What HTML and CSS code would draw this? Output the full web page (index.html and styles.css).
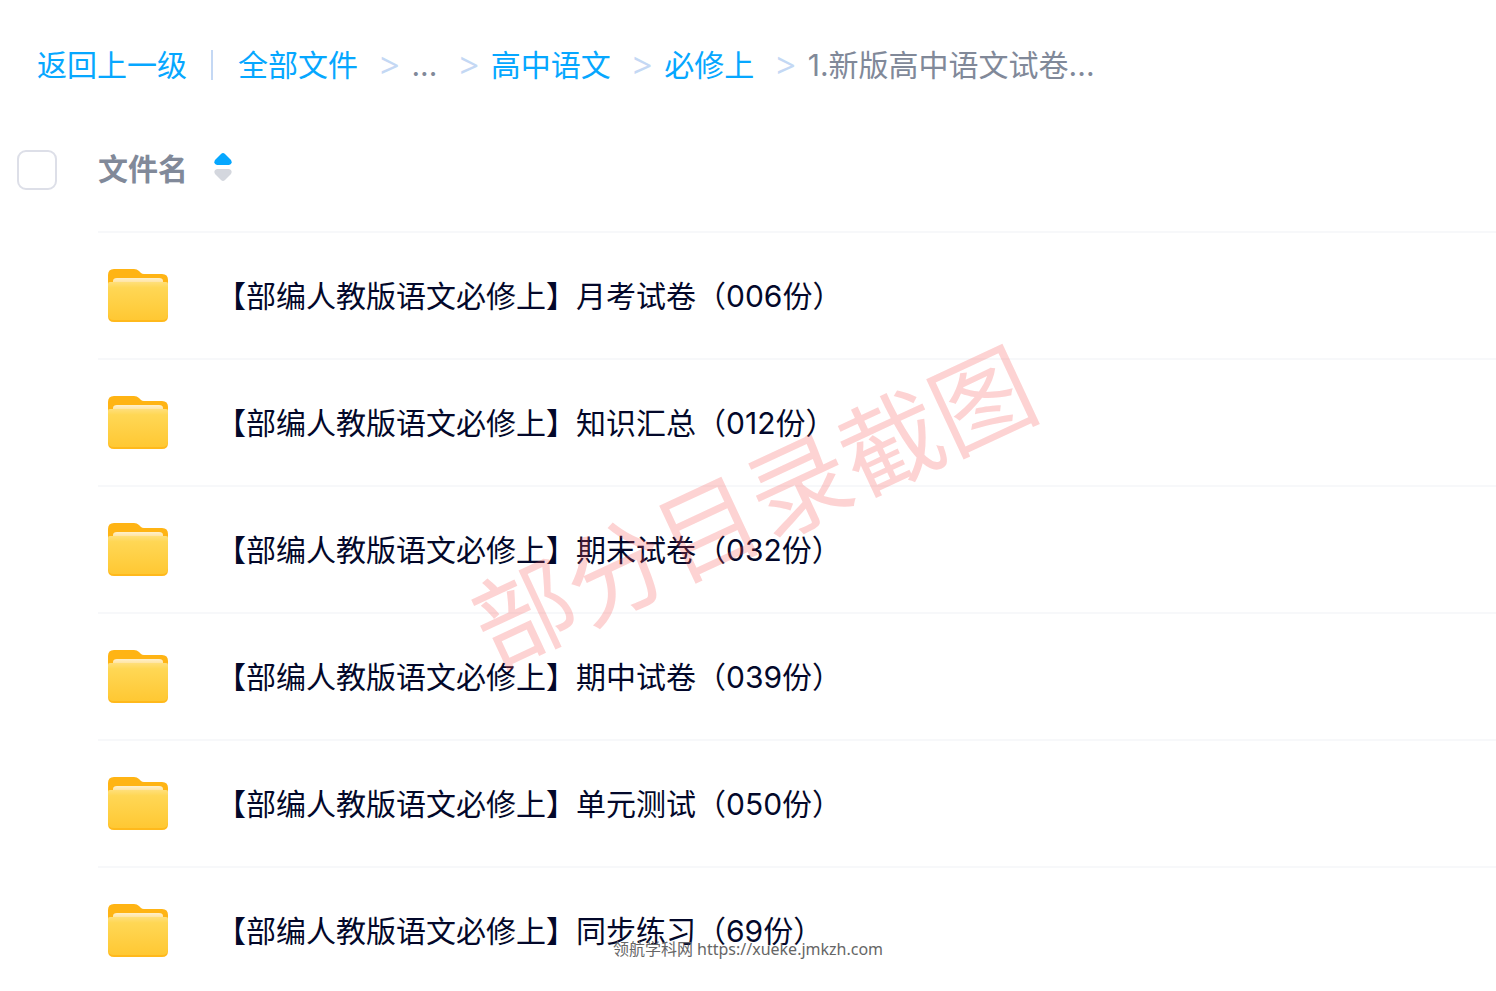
FILE: index.html
```
<!DOCTYPE html>
<html lang="zh-CN">
<head>
    <meta charset="UTF-8">
    <meta name="viewport" content="width=device-width, initial-scale=1.0">
    <title>全部文件</title>
    <link rel="stylesheet" href="styles.css">
</head>
<body>
    <!-- shared folder icon -->
    <svg class="defs" width="0" height="0" aria-hidden="true">
        <defs>
            <linearGradient id="front" x1="0" y1="0" x2="0" y2="1">
                <stop offset="0" stop-color="#ffdf7a"/>
                <stop offset="0.15" stop-color="#ffd755"/>
                <stop offset="1" stop-color="#ffc833"/>
            </linearGradient>
            <linearGradient id="paper" x1="0" y1="0" x2="0" y2="1">
                <stop offset="0" stop-color="#fff0cb"/>
                <stop offset="1" stop-color="#ffe29a"/>
            </linearGradient>
        </defs>
        <symbol id="folder" viewBox="0 0 60 54">
            <path d="M0 6Q0 0 6 0H26Q29 0 31 2L33 4Q34 5 36 5H54Q60 5 60 11V25H0Z" fill="#ffb414"/>
            <path d="M5 14V12Q5 9 9 9H51Q55 9 55 12V14Z" fill="url(#paper)"/>
            <path d="M0 13H60V47Q60 53 54 53H6Q0 53 0 47Z" fill="#ffb91c"/>
            <path d="M0 15Q0 13 2 13H58Q60 13 60 15V45Q60 51 54 51H6Q0 51 0 45Z" fill="url(#front)"/>
        </symbol>
    </svg>

    <nav class="breadcrumb">
        <a href="#">返回上一级</a>
        <span class="divider"></span>
        <a href="#">全部文件</a>
        <span class="arrow">&gt;</span>
        <span class="current">...</span>
        <span class="arrow">&gt;</span>
        <a href="#">高中语文</a>
        <span class="arrow">&gt;</span>
        <a href="#">必修上</a>
        <span class="arrow">&gt;</span>
        <span class="current">1.新版高中语文试卷...</span>
    </nav>

    <table class="files">
        <thead>
            <tr>
                <th class="check"><input type="checkbox" aria-label="全选"></th>
                <th class="name">
                    <button class="sort" type="button">
                        文件名
                        <svg width="18" height="34" viewBox="0 0 18 34" aria-hidden="true">
                            <path d="M7 2Q9 0 11 2L17 8Q19 12 15 13H3Q-1 12 1 8Z" fill="#06a7ff"/>
                            <path d="M7 28Q9 30 11 28L17 22Q19 18 15 17H3Q-1 18 1 22Z" fill="#d4d7de"/>
                        </svg>
                    </button>
                </th>
            </tr>
        </thead>
        <tbody>
            <tr>
                <td></td>
                <td class="name"><div class="file"><svg class="icon"><use href="#folder"/></svg><span>【部编人教版语文必修上】月考试卷（006份）</span></div></td>
            </tr>
            <tr>
                <td></td>
                <td class="name"><div class="file"><svg class="icon"><use href="#folder"/></svg><span>【部编人教版语文必修上】知识汇总（012份）</span></div></td>
            </tr>
            <tr>
                <td></td>
                <td class="name"><div class="file"><svg class="icon"><use href="#folder"/></svg><span>【部编人教版语文必修上】期末试卷（032份）</span></div></td>
            </tr>
            <tr>
                <td></td>
                <td class="name"><div class="file"><svg class="icon"><use href="#folder"/></svg><span>【部编人教版语文必修上】期中试卷（039份）</span></div></td>
            </tr>
            <tr>
                <td></td>
                <td class="name"><div class="file"><svg class="icon"><use href="#folder"/></svg><span>【部编人教版语文必修上】单元测试（050份）</span></div></td>
            </tr>
            <tr>
                <td></td>
                <td class="name"><div class="file"><svg class="icon"><use href="#folder"/></svg><span>【部编人教版语文必修上】同步练习（69份）</span></div></td>
            </tr>
        </tbody>
    </table>

    <div class="watermark">部分目录截图</div>
    <div class="site">领航学科网 https://xueke.jmkzh.com</div>
</body>
</html>
```
FILE: styles.css
```
* {
    box-sizing: border-box;
}
body {
    position: relative;
    margin: 0;
    overflow: hidden;
    background-color: #fff;
    color: #03082a;
    font-family: Inter, "Noto Sans CJK SC", sans-serif;
    font-size: 30px;
    line-height: 44px;
}
.defs {
    position: absolute;
}
.breadcrumb {
    display: flex;
    align-items: center;
    padding: 43px 37px 18px;
    white-space: nowrap;
}
.breadcrumb a {
    color: #06a7ff;
    text-decoration: none;
}
.divider {
    width: 2px;
    height: 30px;
    margin: 0 25px 0 24px;
    background-color: #c4d8f4;
}
.arrow {
    margin: 0 12px 0 22px;
    color: #c4d8f4;
    font-family: "Noto Sans", sans-serif;
    font-size: 34px;
}
.current {
    color: #818999;
}
.files {
    width: 100%;
    border-collapse: collapse;
    table-layout: fixed;
}
.files th,
.files td {
    height: 127px;
    padding: 0;
    text-align: left;
}
.files th {
    padding-top: 2px;
}
.check {
    width: 98px;
}
.files .name {
    border-bottom: 2px solid #f7f8fa;
}
.check input {
    display: block;
    appearance: none;
    width: 40px;
    height: 40px;
    margin: 0 0 0 17px;
    border: 2px solid #dddfe8;
    border-radius: 9px;
    background-color: #fff;
}
.sort {
    display: flex;
    align-items: center;
    gap: 26px;
    padding: 0;
    border: 0;
    background: none;
    color: #818999;
    font: inherit;
    font-weight: bold;
}
.file {
    display: flex;
    align-items: center;
    gap: 48px;
    padding-left: 10px;
    white-space: nowrap;
}
.icon {
    width: 60px;
    height: 54px;
}
.watermark {
    position: absolute;
    top: 508px;
    left: 754px;
    color: rgba(246, 80, 80, 0.25);
    font-size: 101px;
    line-height: 1;
    white-space: nowrap;
    pointer-events: none;
    transform: translate(-50%, -50%) rotate(-25deg);
}
.site {
    position: absolute;
    top: 937px;
    right: 0;
    left: 0;
    color: #666;
    font-family: "Noto Sans", "Noto Sans CJK SC", sans-serif;
    font-size: 16px;
    line-height: 24px;
    text-align: center;
    pointer-events: none;
}
```
